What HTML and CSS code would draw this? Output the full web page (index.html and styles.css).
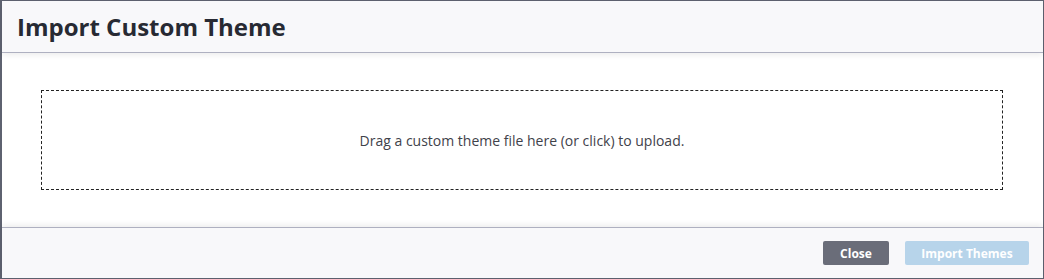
FILE: index.html
```html
<!DOCTYPE html>
<html>
<head>
    <title>Import Custom Theme</title>
    <link rel="stylesheet" href="styles.css">
</head>
<body>
    <div class="modal">
        <div class="modal-header">
            <h2>Import Custom Theme</h2>
        </div>
        <div class="modal-body">
            <div class="dropzone">Drag a custom theme file here (or click) to upload.</div>
        </div>
        <div class="modal-footer">
            <button class="btn btn-close">Close</button>
            <button class="btn btn-import" disabled>Import Themes</button>
        </div>
    </div>
</body>
</html>
```

FILE: styles.css
```css
html, body { margin: 0; padding: 0; }
body { font-family: "Open Sans", Arial, sans-serif; background: #fff; }
.modal { width: 1044px; height: 279px; box-sizing: border-box; border: 1px solid #5e6270; border-left-width: 2px; display: flex; flex-direction: column; background: #fff; }
.modal-header { height: 51px; background: #f8f8fa; border-bottom: 1px solid #aeb0c0; box-shadow: 0 2px 6px rgba(0,0,0,0.08); display: flex; align-items: center; padding: 0 15px; position: relative; z-index: 1; }
.modal-header h2 { margin: 0; font-size: 24px; font-weight: 700; color: #272a33; }
.modal-body { flex: 1; padding: 37px 40px 35px 39px; }
.dropzone { height: 98px; border: 1px dashed #222; display: flex; align-items: center; justify-content: center; font-size: 14px; color: #3f424a; }
.modal-footer { height: 50px; background: #f8f8fa; border-top: 1px solid #aeb0c0; box-shadow: 0 -2px 6px rgba(0,0,0,0.08); display: flex; align-items: center; justify-content: flex-end; gap: 16px; padding: 0 14px; }
.btn { height: 24px; border: none; border-radius: 2px; font-family: "Open Sans", Arial, sans-serif; font-size: 12px; font-weight: 700; color: #fff; padding: 0 16px; }
.btn-close { background: #6a6d79; width: 66px; }
.btn-import { background: #b7d4ea; width: 124px; }
```
